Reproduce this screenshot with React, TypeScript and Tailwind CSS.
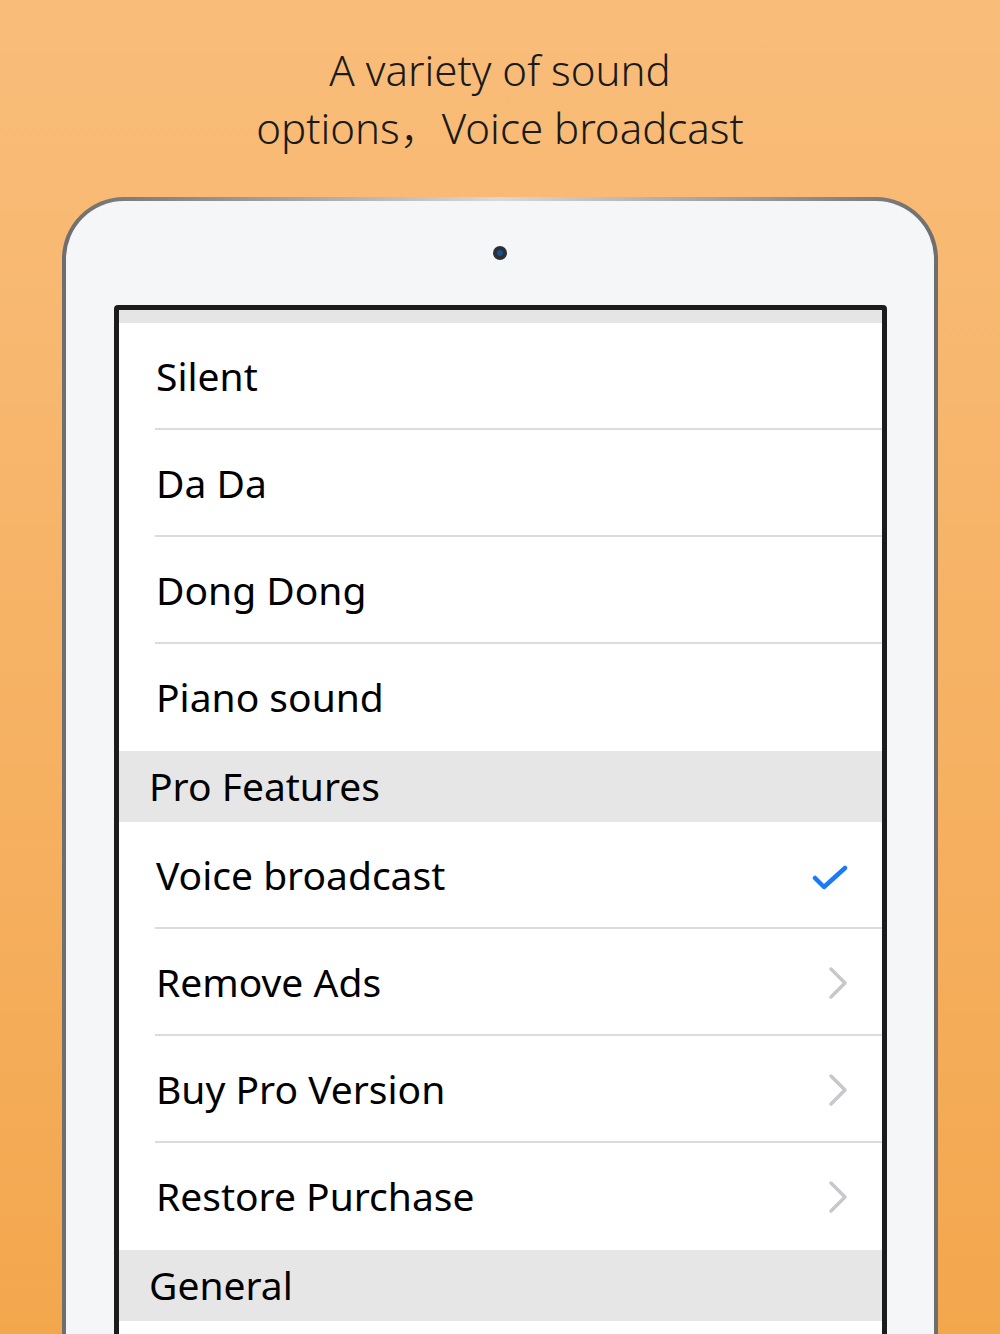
type Row =
  | { kind: 'item'; label: string; accessory?: 'check' | 'chevron'; divider?: boolean }
  | { kind: 'header'; label: string };

const rows: Row[] = [
  { kind: 'item', label: 'Silent', divider: true },
  { kind: 'item', label: 'Da Da', divider: true },
  { kind: 'item', label: 'Dong Dong', divider: true },
  { kind: 'item', label: 'Piano sound' },
  { kind: 'header', label: 'Pro Features' },
  { kind: 'item', label: 'Voice broadcast', accessory: 'check', divider: true },
  { kind: 'item', label: 'Remove Ads', accessory: 'chevron', divider: true },
  { kind: 'item', label: 'Buy Pro Version', accessory: 'chevron', divider: true },
  { kind: 'item', label: 'Restore Purchase', accessory: 'chevron' },
  { kind: 'header', label: 'General' },
];

const font = { fontFamily: '"Noto Sans", "Noto Sans CJK SC", sans-serif' };

function CheckMark() {
  return (
    <svg width="36" height="26" viewBox="0 0 36 26" className="mr-[-2px] mt-[4px]">
      <polyline
        points="3,13 12,22 33,3"
        fill="none"
        stroke="#1a7cf5"
        strokeWidth="4.5"
        strokeLinecap="round"
        strokeLinejoin="round"
      />
    </svg>
  );
}

function Chevron() {
  return (
    <svg width="20" height="34" viewBox="0 0 20 34" className="mr-[-2px]">
      <polyline
        points="3,3 17,17 3,31"
        fill="none"
        stroke="#c7c7cc"
        strokeWidth="3.5"
        strokeLinecap="round"
        strokeLinejoin="round"
      />
    </svg>
  );
}

export default function App() {
  return (
    <div
      className="w-[1000px] h-[1334px] overflow-hidden bg-gradient-to-b from-[#f9bd7a] to-[#f3a74d]"
      style={font}
    >
      {/* Caption */}
      <div className="pt-[41px] text-center text-[42px] leading-[58px] font-light text-[#1a1a1a]">
        <p>A variety of sound</p>
        <p>options，Voice broadcast</p>
      </div>

      {/* iPad frame */}
      <div className="mt-[40px] ml-[62px] w-[876px] h-[1200px] rounded-t-[62px] bg-gradient-to-r from-[#6e6e6e] via-[#d8d8d8] to-[#6e6e6e] p-[4px] pb-0">
        <div className="h-full rounded-t-[58px] bg-[#f5f6f8] pt-[45px]">
          <div className="flex justify-center">
            <span className="w-[14px] h-[14px] rounded-full bg-[#2b2f36] flex items-center justify-center">
              <span className="w-[6px] h-[6px] rounded-full bg-[#1c4f8f]" />
            </span>
          </div>

          {/* Screen */}
          <div className="mt-[45px] ml-[48px] w-[773px] h-[1100px] rounded-[4px] border-[5px] border-[#1c1c1c] bg-white overflow-hidden">
            <div className="h-[13px] bg-[#e5e5e5]" />
            {rows.map((row, i) =>
              row.kind === 'header' ? (
                <div
                  key={i}
                  className="h-[71px] bg-[#e6e6e6] pl-[30px] flex items-center text-[39px] text-black"
                >
                  {row.label}
                </div>
              ) : (
                <div key={i} className="relative h-[107px] flex items-center pl-[37px] pr-[36px]">
                  <span className="flex-1 text-[39px] text-black">{row.label}</span>
                  {row.accessory === 'check' && <CheckMark />}
                  {row.accessory === 'chevron' && <Chevron />}
                  {row.divider && (
                    <span className="absolute left-[36px] right-0 bottom-0 h-[2px] bg-[#dcdcde]" />
                  )}
                </div>
              )
            )}
          </div>
        </div>
      </div>
    </div>
  );
}
